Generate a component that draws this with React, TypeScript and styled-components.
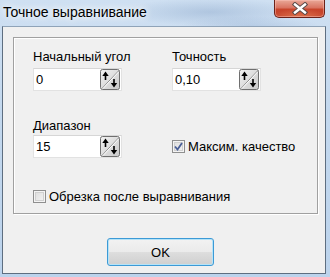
import React, { FC } from "react";
import styled, { createGlobalStyle } from "styled-components";

const GlobalStyle = createGlobalStyle`
    html, body {
        margin: 0;
        padding: 0;
        background: #c9dcf0;
    }
    body {
        font-family: "Liberation Sans", Arial, sans-serif;
        font-size: 13px;
        color: #000;
    }
`;

const Window = styled.div`
    width: 330px;
    height: 277px;
    box-sizing: border-box;
    padding: 0 4px 3px 2px;
    display: flex;
    flex-direction: column;
    background:
        radial-gradient(ellipse 90px 14px at 210px 12px, rgba(120, 150, 190, 0.35), transparent),
        radial-gradient(ellipse 70px 10px at 250px 26px, rgba(130, 160, 200, 0.3), transparent),
        linear-gradient(180deg, #cfe0f2 0%, #c3d8ee 40%, #bcd3ec 100%);
    overflow: hidden;
`;

const TitleBar = styled.div`
    height: 26px;
    display: flex;
    align-items: flex-start;
    justify-content: space-between;
    flex-shrink: 0;
`;

const Title = styled.div`
    font-family: "Liberation Sans", Arial, sans-serif;
    font-size: 14px;
    line-height: 18px;
    margin: 3px 0 0 1px;
    color: #000;
    text-shadow: 0 0 6px #ffffff, 0 0 10px #ffffff;
`;

const CloseButton = styled.div`
    width: 51px;
    height: 18px;
    margin-right: 1px;
    box-sizing: border-box;
    border: 1px solid #6b2219;
    border-top: none;
    border-radius: 0 0 5px 5px;
    background:
        radial-gradient(ellipse 30px 8px at 50% 100%, rgba(240, 150, 100, 0.6), transparent),
        linear-gradient(180deg, #e9a898 0%, #d97462 45%, #c8452c 55%, #c24029 100%);
    box-shadow: inset 0 0 0 1px rgba(255, 200, 190, 0.45);
    display: flex;
    align-items: center;
    justify-content: center;
`;

const Client = styled.div`
    flex: 1;
    border: 1px solid #5e6e80;
    border-top-color: #8fa3b8;
    background: #f0f0f0;
    display: flex;
    flex-direction: column;
    padding: 10px 7px 7px 10px;
`;

const GroupBox = styled.div`
    height: 177px;
    box-sizing: border-box;
    border: 1px solid #a0a0a0;
    box-shadow: inset 1px 1px 0 #ffffff, 1px 1px 0 #ffffff;
    padding: 11px 0 0 19px;
    display: grid;
    grid-template-columns: 139px 1fr;
    align-content: start;
`;

const Field = styled.div<{ $gap: number; $top?: number }>`
    display: flex;
    flex-direction: column;
    gap: ${p => p.$gap}px;
    margin-top: ${p => p.$top ?? 0}px;
`;

const Label = styled.div`
    line-height: 15px;
    white-space: nowrap;
`;

const Edit = styled.div`
    width: 89px;
    height: 23px;
    box-sizing: border-box;
    background: #fff;
    border: 1px solid #e2e2e2;
    border-top-color: #d6d6d6;
    display: flex;
    align-items: center;
    justify-content: space-between;
    padding: 0 1px 0 2px;
`;

const EditValue = styled.span`
    font-size: 13px;
`;

const CheckCell = styled.div<{ $top: number }>`
    display: flex;
    align-items: center;
    padding-top: 17px;
    margin-top: ${p => p.$top}px;
`;

const CheckRow = styled.label<{ $wide?: boolean; $top?: number }>`
    display: flex;
    align-items: center;
    gap: 3px;
    margin-top: ${p => p.$top ?? 0}px;
    white-space: nowrap;
    grid-column: ${p => (p.$wide ? "1 / span 2" : "auto")};
`;

const Box = styled.span`
    width: 13px;
    height: 13px;
    box-sizing: border-box;
    border: 1px solid #8f8f8f;
    background: linear-gradient(135deg, #dcdcdc 0%, #f4f4f4 100%);
    box-shadow: inset 0 0 0 1px #f4f4f4, inset 0 0 0 2px #d0d0d0;
    display: flex;
    align-items: center;
    justify-content: center;
`;

const Footer = styled.div`
    flex: 1;
    display: flex;
    align-items: flex-end;
    justify-content: center;
    padding-right: 10px;
`;

const OkButton = styled.button`
    width: 107px;
    height: 28px;
    box-sizing: border-box;
    border: 1px solid #3c9ad6;
    border-radius: 3px;
    box-shadow: inset 0 0 0 1px #b5e3f8;
    background: linear-gradient(180deg, #f2f2f2 0%, #ebebeb 48%, #dddddd 52%, #cfcfcf 100%);
    font-family: "Liberation Sans", Arial, sans-serif;
    font-size: 13px;
    color: #000;
    padding: 0;
`;

const SpinIcon: FC = () => (
    <svg width="20" height="21" viewBox="0 0 20 21">
        <defs>
            <linearGradient id="spg" x1="0" y1="0" x2="1" y2="1">
                <stop offset="0" stopColor="#f2f2f2" />
                <stop offset="1" stopColor="#c9c9c9" />
            </linearGradient>
        </defs>
        <rect x="0.5" y="0.5" width="19" height="20" rx="2" fill="url(#spg)" stroke="#6f6f6f" />
        <line x1="2" y1="19.5" x2="18.5" y2="2" stroke="#8a8a8a" strokeWidth="1" />
        <line x1="3" y1="19.5" x2="18.5" y2="3" stroke="#ffffff" strokeWidth="1" />
        <line x1="5.5" y1="5.5" x2="5.5" y2="11" stroke="#000" strokeWidth="1.6" />
        <polygon points="2.3,7 5.5,2.6 8.7,7" fill="#000" />
        <line x1="14" y1="10" x2="14" y2="15.5" stroke="#000" strokeWidth="1.6" />
        <polygon points="10.8,14 14,18.4 17.2,14" fill="#000" />
    </svg>
);

const CloseGlyph: FC = () => (
    <svg width="18" height="13" viewBox="0 0 18 13">
        <path d="M4 2.5 L14 10.5 M14 2.5 L4 10.5" stroke="#5a4a48" strokeWidth="4.4" strokeLinecap="square" />
        <path d="M4 2.5 L14 10.5 M14 2.5 L4 10.5" stroke="#ffffff" strokeWidth="2.4" strokeLinecap="square" />
    </svg>
);

const CheckMark: FC = () => (
    <svg width="9" height="9" viewBox="0 0 9 9">
        <path d="M1 4.5 L3.5 7.5 L8 1" fill="none" stroke="#4a5f97" strokeWidth="1.8" />
    </svg>
);

const Spin: FC<{ value: string }> = ({ value }) => (
    <Edit>
        <EditValue>{value}</EditValue>
        <SpinIcon />
    </Edit>
);

export default function App() {
    return (
        <Window>
            <GlobalStyle />
            <TitleBar>
                <Title>Точное выравнивание</Title>
                <CloseButton>
                    <CloseGlyph />
                </CloseButton>
            </TitleBar>
            <Client>
                <GroupBox>
                    <Field $gap={4}>
                        <Label>Начальный угол</Label>
                        <Spin value="0" />
                    </Field>
                    <Field $gap={4}>
                        <Label>Точность</Label>
                        <Spin value="0,10" />
                    </Field>
                    <Field $gap={2} $top={27}>
                        <Label>Диапазон</Label>
                        <Spin value="15" />
                    </Field>
                    <CheckCell $top={27}>
                        <CheckRow>
                            <Box>
                                <CheckMark />
                            </Box>
                            Максим. качество
                        </CheckRow>
                    </CheckCell>
                    <CheckRow $wide $top={31}>
                        <Box />
                        Обрезка после выравнивания
                    </CheckRow>
                </GroupBox>
                <Footer>
                    <OkButton>OK</OkButton>
                </Footer>
            </Client>
        </Window>
    );
}
